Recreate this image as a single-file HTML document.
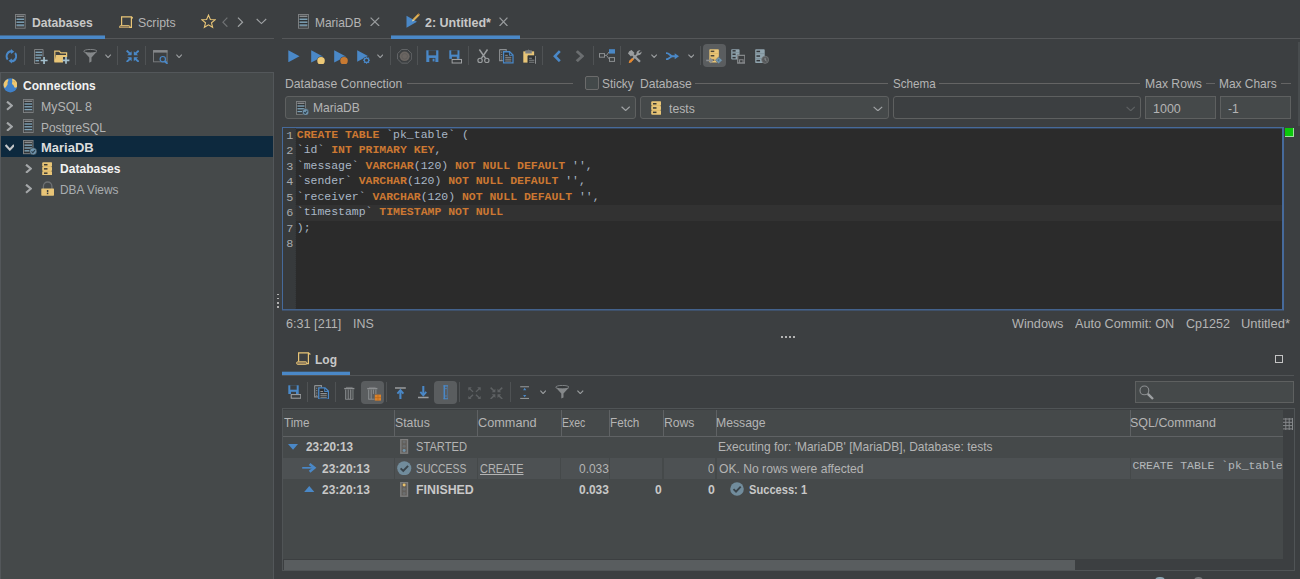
<!DOCTYPE html>
<html lang="en"><head><meta charset="utf-8"><title>DBeaver - SQL Editor</title><style>
html,body{margin:0;padding:0}
body{width:1300px;height:579px;overflow:hidden;background:#3c3f41;position:relative;font-family:"Liberation Sans",sans-serif;font-size:13px;color:#b4b4b4}
.a{position:absolute;display:block}
.t{position:absolute;white-space:pre;line-height:17px;transform-origin:0 0;display:block}
.b{font-weight:700}
.ln,.cd{position:absolute;white-space:pre;font-family:"Liberation Mono",monospace;font-size:11.47px;line-height:15px;color:#a9b7c6;letter-spacing:0;display:block}
.ln{color:#a7abae;font-size:11.8px;line-height:16px;letter-spacing:0}
.cd b{color:#cc7832}
</style></head><body>
<div class="a" style="left:0px;top:38px;width:273.5px;height:1px;background:#555759"></div>
<div class="a" style="left:0px;top:36px;width:105.4px;height:3px;background:#4a88c7"></div>
<div class="a" style="left:0px;top:35px;width:105.4px;height:1px;background:#4a88c7;opacity:.55"></div>
<svg class="a" style="left:15px;top:14.3px" width="10.6" height="14.7" viewBox="0 0 11 15" preserveAspectRatio="none"><rect x="0.5" y="0.5" width="10" height="14" fill="#2f3234" stroke="#7d8082" stroke-width="1"/><rect x="1.5" y="1.6" width="8" height="1.6" fill="#8a8c8e"/><rect x="1.5" y="4.6" width="8" height="1.5" fill="#7fa3b8"/><rect x="1.5" y="7.6" width="8" height="1.5" fill="#7fa3b8"/><rect x="1.5" y="10.6" width="8" height="1.5" fill="#7fa3b8"/><rect x="1.5" y="12.6" width="8" height="0.8" fill="#6b6e70"/></svg>
<span class="t b" style="left:32.47px;top:14px;transform:scaleX(0.9344);color:#c8c8c8;">Databases</span>
<svg class="a" style="left:118.6px;top:15.6px" width="14.5" height="12.8" viewBox="0 0 14.5 13" preserveAspectRatio="none"><path d="M2.6 9.6 V0.9 H12.4 V11.6 H10" fill="none" stroke="#e8c577" stroke-width="1.2"/><path d="M12.4 1.4 H13.9 V2.9" fill="none" stroke="#e8c577" stroke-width="1"/><rect x="0.7" y="9.8" width="10" height="2.5" rx="0.8" fill="#7d6c55" stroke="#e8c577" stroke-width="1"/></svg>
<span class="t" style="left:138.05px;top:14px;transform:scaleX(0.9474);">Scripts</span>
<svg class="a" style="left:200.5px;top:14.3px" width="15" height="14.5" viewBox="0 0 16 16" preserveAspectRatio="none"><path d="M8 1.2 L10 6 L15 6.4 L11.2 9.7 L12.4 14.7 L8 12 L3.6 14.7 L4.8 9.7 L1 6.4 L6 6 Z" fill="none" stroke="#e8c577" stroke-width="1.2" stroke-linejoin="miter"/></svg>
<svg class="a" style="left:221.6px;top:16.8px" width="6.3" height="10.4" viewBox="0 0 10 16" preserveAspectRatio="none"><path d="M8.5 1 L1.5 8 L8.5 15" fill="none" stroke="#6f7274" stroke-width="1.2" vector-effect="non-scaling-stroke"/></svg>
<svg class="a" style="left:237.2px;top:16.8px" width="6.5" height="10.4" viewBox="0 0 10 16" preserveAspectRatio="none"><path d="M1.5 1 L8.5 8 L1.5 15" fill="none" stroke="#a0a3a5" stroke-width="1.2" vector-effect="non-scaling-stroke"/></svg>
<svg class="a" style="left:256.1px;top:18.3px" width="10.9" height="6.6" viewBox="0 0 16 10" preserveAspectRatio="none"><path d="M1 1.5 L8 8.5 L15 1.5" fill="none" stroke="#a0a3a5" stroke-width="1.1" vector-effect="non-scaling-stroke"/></svg>
<div class="a" style="left:23.9px;top:45.8px;width:1px;height:19.5px;background:#4f5254"></div>
<div class="a" style="left:75.2px;top:45.8px;width:1px;height:19.5px;background:#4f5254"></div>
<div class="a" style="left:116.8px;top:45.8px;width:1px;height:19.5px;background:#4f5254"></div>
<div class="a" style="left:145.1px;top:45.8px;width:1px;height:19.5px;background:#4f5254"></div>
<svg class="a" style="left:4.6px;top:49.4px" width="12.8" height="14.5" viewBox="0 0 16 16" preserveAspectRatio="none"><path d="M8.4 2.6 A5.5 5.5 0 0 0 3.4 11.6" fill="none" stroke="#4a88c7" stroke-width="2.4"/><path d="M7.6 13.4 A5.5 5.5 0 0 0 12.6 4.4" fill="none" stroke="#4a88c7" stroke-width="2.4"/><path d="M7.4 0 L11.6 2.9 L7.4 5.6 Z" fill="#4a88c7"/><path d="M8.6 16 L4.4 13.1 L8.6 10.4 Z" fill="#4a88c7"/></svg>
<svg class="a" style="left:34px;top:49px" width="13.8" height="15" viewBox="0 0 14 15" preserveAspectRatio="none"><path d="M0.5 0.5 H9.2 V7.5 M5.5 14.5 H0.5 V0.5" fill="none" stroke="#7d8082" stroke-width="1"/><rect x="1.5" y="2.6" width="6.8" height="1.4" fill="#7fa3b8"/><rect x="1.5" y="5.4" width="6.8" height="1.4" fill="#7fa3b8"/><rect x="1.5" y="8.2" width="5.6" height="1.4" fill="#7fa3b8"/><rect x="1.5" y="11" width="3.6" height="1.4" fill="#7fa3b8"/><path d="M10.2 8 V15 M6.7 11.5 H13.8" stroke="#a4c0ce" stroke-width="1.7" fill="none"/></svg>
<svg class="a" style="left:54.4px;top:49.4px" width="16" height="14.8" viewBox="0 0 16 15" preserveAspectRatio="none"><path d="M0.8 13 V2.2 H5.2 L6.8 4 H12.6 V6" fill="#3c3f41" stroke="#e8c577" stroke-width="1.2"/><path d="M0.3 13.6 L2 6 H13.2 V8 H9 V13.6 Z" fill="#e8c577"/><path d="M12 8.2 V15 M8.6 11.6 H15.4" stroke="#a4c0ce" stroke-width="1.7" fill="none"/></svg>
<svg class="a" style="left:82.6px;top:48.8px" width="14.8" height="14.6" viewBox="0 0 16 16" preserveAspectRatio="none"><path d="M0.6 2.4 L6.8 9.4 V15 L9.2 13.8 V9.4 L15.4 2.4 Z" fill="#85888a"/><ellipse cx="8" cy="2.4" rx="7.2" ry="1.9" fill="#35383a" stroke="#85888a" stroke-width="1"/></svg>
<svg class="a" style="left:105.4px;top:53.6px" width="6.2" height="4.2" viewBox="0 0 16 10" preserveAspectRatio="none"><path d="M1 1.5 L8 8.5 L15 1.5" fill="none" stroke="#9a9d9f" stroke-width="1.2" vector-effect="non-scaling-stroke"/></svg>
<svg class="a" style="left:125.7px;top:49.6px" width="13.4" height="12.5" viewBox="0 0 16 16" preserveAspectRatio="none"><path d="M0.8 0.8 L5.7 5.7" stroke="#4a88c7" stroke-width="2.4" fill="none"/><path d="M6.7 6.7 L1.5 6.7 L6.7 1.5 Z" fill="#4a88c7"/><path d="M15.2 0.8 L10.3 5.7" stroke="#4a88c7" stroke-width="2.4" fill="none"/><path d="M9.3 6.7 L14.5 6.7 L9.3 1.5 Z" fill="#4a88c7"/><path d="M0.8 15.2 L5.7 10.3" stroke="#4a88c7" stroke-width="2.4" fill="none"/><path d="M6.7 9.3 L1.5 9.3 L6.7 14.5 Z" fill="#4a88c7"/><path d="M15.2 15.2 L10.3 10.3" stroke="#4a88c7" stroke-width="2.4" fill="none"/><path d="M9.3 9.3 L14.5 9.3 L9.3 14.5 Z" fill="#4a88c7"/></svg>
<svg class="a" style="left:153px;top:49.6px" width="15.2" height="14.4" viewBox="0 0 15.2 14.4" preserveAspectRatio="none"><rect x="0.5" y="0.6" width="13.6" height="11.2" fill="none" stroke="#77797b" stroke-width="1"/><rect x="0.2" y="0.2" width="14.2" height="2.4" fill="#85888a"/><circle cx="9.8" cy="9.2" r="2.7" fill="#3c3f41" stroke="#4a88c7" stroke-width="1.2"/><path d="M11.8 11.2 L14.6 13.8" stroke="#4a88c7" stroke-width="1.9"/></svg>
<svg class="a" style="left:175.6px;top:53.6px" width="6.2" height="4.2" viewBox="0 0 16 10" preserveAspectRatio="none"><path d="M1 1.5 L8 8.5 L15 1.5" fill="none" stroke="#9a9d9f" stroke-width="1.2" vector-effect="non-scaling-stroke"/></svg>
<div class="a" style="left:0px;top:72px;width:274px;height:510px;background:#45494a;border:1px solid #53575a;box-sizing:border-box"></div>
<div class="a" style="left:1px;top:136px;width:272px;height:21px;background:#0d293e"></div>
<svg class="a" style="left:2.7px;top:77.8px" width="14.8" height="14.8" viewBox="0 0 16 16" preserveAspectRatio="none"><circle cx="8" cy="8" r="7.6" fill="#3f80c8"/><path d="M4.2 1.6 C2.6 2.6 1.2 4.2 0.7 6.2 C0.5 8 0.9 9.6 1.8 10.8 C2.8 10.6 3.4 9.6 3.8 8.6 C4.8 7.8 5.4 6.6 4.8 5.4 C5 4.2 5.8 3.2 6 2 C5.4 1.4 4.8 1.3 4.2 1.6 Z" fill="#efc76f"/><path d="M9.8 0.7 C11.8 1 13.6 2.2 14.7 4.2 C15.5 6 15.6 8 15 9.8 C14 10.6 13 10.8 12.2 10 C12 8.8 11.6 8 10.6 7.4 C9.6 6.6 9.4 5.6 10 4.6 C10.4 3.4 9.6 2 9.8 0.7 Z" fill="#efc76f"/><path d="M11.4 3.6 L12.6 4 L12.2 5 Z" fill="#8a6a30"/></svg>
<span class="t b" style="left:23.00px;top:77px;transform:scaleX(0.9244);color:#f2f2f2;">Connections</span>
<svg class="a" style="left:6.4px;top:101.4px" width="6.8" height="9.4" viewBox="0 0 10 16" preserveAspectRatio="none"><path d="M1.5 1 L8.5 8 L1.5 15" fill="none" stroke="#a4a7a9" stroke-width="2.1" vector-effect="non-scaling-stroke"/></svg>
<svg class="a" style="left:23.3px;top:98.7px" width="10.6" height="14" viewBox="0 0 11 15" preserveAspectRatio="none"><rect x="0.5" y="0.5" width="10" height="14" fill="#2f3234" stroke="#7d8082" stroke-width="1"/><rect x="1.5" y="1.6" width="8" height="1.6" fill="#8a8c8e"/><rect x="1.5" y="4.6" width="8" height="1.5" fill="#7fa3b8"/><rect x="1.5" y="7.6" width="8" height="1.5" fill="#7fa3b8"/><rect x="1.5" y="10.6" width="8" height="1.5" fill="#7fa3b8"/><rect x="1.5" y="12.6" width="8" height="0.8" fill="#6b6e70"/></svg>
<span class="t" style="left:40.65px;top:98px;transform:scaleX(0.9481);">MySQL 8</span>
<svg class="a" style="left:6.4px;top:122px" width="6.8" height="9.4" viewBox="0 0 10 16" preserveAspectRatio="none"><path d="M1.5 1 L8.5 8 L1.5 15" fill="none" stroke="#a4a7a9" stroke-width="2.1" vector-effect="non-scaling-stroke"/></svg>
<svg class="a" style="left:23.3px;top:119.3px" width="10.6" height="14" viewBox="0 0 11 15" preserveAspectRatio="none"><rect x="0.5" y="0.5" width="10" height="14" fill="#2f3234" stroke="#7d8082" stroke-width="1"/><rect x="1.5" y="1.6" width="8" height="1.6" fill="#8a8c8e"/><rect x="1.5" y="4.6" width="8" height="1.5" fill="#7fa3b8"/><rect x="1.5" y="7.6" width="8" height="1.5" fill="#7fa3b8"/><rect x="1.5" y="10.6" width="8" height="1.5" fill="#7fa3b8"/><rect x="1.5" y="12.6" width="8" height="0.8" fill="#6b6e70"/></svg>
<span class="t" style="left:40.68px;top:119px;transform:scaleX(0.9157);">PostgreSQL</span>
<svg class="a" style="left:4.7px;top:144.4px" width="9.7" height="6.6" viewBox="0 0 16 10" preserveAspectRatio="none"><path d="M1 1.5 L8 8.5 L15 1.5" fill="none" stroke="#c4c7c9" stroke-width="2.1" vector-effect="non-scaling-stroke"/></svg>
<svg class="a" style="left:23.2px;top:140px" width="14" height="15.2" viewBox="0 0 14 15" preserveAspectRatio="none"><rect x="0.5" y="0.5" width="9.5" height="13" fill="#2f3234" stroke="#7d8082" stroke-width="1"/><rect x="1.5" y="1.6" width="7.5" height="1.5" fill="#8a8c8e"/><rect x="1.5" y="4.4" width="7.5" height="1.4" fill="#7fa3b8"/><rect x="1.5" y="7.2" width="7.5" height="1.4" fill="#7fa3b8"/><rect x="1.5" y="10" width="5" height="1.4" fill="#7fa3b8"/><circle cx="10.2" cy="11.2" r="3.5" fill="#6f94ad" stroke="#3c3f41" stroke-width="0.6"/><path d="M8.5 11.2 L9.8 12.5 L12 9.9" fill="none" stroke="#2b3d4a" stroke-width="1.1"/></svg>
<span class="t b" style="left:40.60px;top:139px;transform:scaleX(0.9980);color:#dcdcdc;">MariaDB</span>
<svg class="a" style="left:24.8px;top:163.6px" width="6.8" height="9.4" viewBox="0 0 10 16" preserveAspectRatio="none"><path d="M1.5 1 L8.5 8 L1.5 15" fill="none" stroke="#a4a7a9" stroke-width="2.1" vector-effect="non-scaling-stroke"/></svg>
<svg class="a" style="left:42px;top:161.5px" width="10.4" height="13.8" viewBox="0 0 10.6 14" preserveAspectRatio="none"><rect x="0.2" y="0.2" width="10.2" height="13.6" rx="1.2" fill="#e8c577"/><rect x="2" y="2" width="3.6" height="1.5" fill="#3a3a34"/><rect x="2" y="6.2" width="3.6" height="1.5" fill="#3a3a34"/><rect x="2" y="10.6" width="3.6" height="1.5" fill="#3a3a34"/><rect x="9.6" y="4.3" width="1" height="0.9" fill="#45494a"/><rect x="9.6" y="8.8" width="1" height="0.9" fill="#45494a"/><rect x="0" y="4.3" width="0.7" height="0.9" fill="#45494a"/><rect x="0" y="8.8" width="0.7" height="0.9" fill="#45494a"/><rect x="0.8" y="4.5" width="8.8" height="0.5" fill="#d4ae5a"/><rect x="0.8" y="9" width="8.8" height="0.5" fill="#d4ae5a"/></svg>
<span class="t b" style="left:59.67px;top:160px;transform:scaleX(0.9281);color:#f2f2f2;">Databases</span>
<svg class="a" style="left:24.8px;top:184.2px" width="6.8" height="9.4" viewBox="0 0 10 16" preserveAspectRatio="none"><path d="M1.5 1 L8.5 8 L1.5 15" fill="none" stroke="#a4a7a9" stroke-width="2.1" vector-effect="non-scaling-stroke"/></svg>
<svg class="a" style="left:40.8px;top:180.8px" width="13.3" height="15" viewBox="0 0 13.4 15" preserveAspectRatio="none"><path d="M2.4 8 V5.4 A4.3 4.4 0 0 1 11 5.4 V8" fill="none" stroke="#6e7173" stroke-width="1.3"/><rect x="0.3" y="7.5" width="12.8" height="7.2" rx="0.6" fill="#e8c577"/><rect x="5.9" y="9" width="1.5" height="2.4" fill="#3c3f41"/><rect x="5.9" y="12" width="1.5" height="1.2" fill="#3c3f41"/></svg>
<span class="t" style="left:59.69px;top:181px;transform:scaleX(0.9127);color:#a9adb0;">DBA Views</span>
<div class="a" style="left:277.2px;top:293.8px;width:1.6px;height:1.6px;background:#b0b0b0"></div>
<div class="a" style="left:277.2px;top:297.90000000000003px;width:1.6px;height:1.6px;background:#b0b0b0"></div>
<div class="a" style="left:277.2px;top:302.0px;width:1.6px;height:1.6px;background:#b0b0b0"></div>
<div class="a" style="left:277.2px;top:306.1px;width:1.6px;height:1.6px;background:#b0b0b0"></div>
<div class="a" style="left:282.3px;top:38px;width:1018px;height:1px;background:#555759"></div>
<div class="a" style="left:390.9px;top:36px;width:129.4px;height:3px;background:#4a88c7"></div>
<div class="a" style="left:390.9px;top:35px;width:129.4px;height:1px;background:#4a88c7;opacity:.55"></div>
<svg class="a" style="left:297.8px;top:14.3px" width="10.9" height="14.7" viewBox="0 0 11 15" preserveAspectRatio="none"><rect x="0.5" y="0.5" width="10" height="14" fill="#2f3234" stroke="#7d8082" stroke-width="1"/><rect x="1.5" y="1.6" width="8" height="1.6" fill="#8a8c8e"/><rect x="1.5" y="4.6" width="8" height="1.5" fill="#7fa3b8"/><rect x="1.5" y="7.6" width="8" height="1.5" fill="#7fa3b8"/><rect x="1.5" y="10.6" width="8" height="1.5" fill="#7fa3b8"/><rect x="1.5" y="12.6" width="8" height="0.8" fill="#6b6e70"/></svg>
<span class="t" style="left:315.08px;top:14px;transform:scaleX(0.9184);">MariaDB</span>
<svg class="a" style="left:369.9px;top:16.8px" width="9.8" height="9.6" viewBox="0 0 16 16" preserveAspectRatio="none"><path d="M1 1 L15 15 M15 1 L1 15" fill="none" stroke="#9a9d9f" stroke-width="1.2" vector-effect="non-scaling-stroke"/></svg>
<svg class="a" style="left:406.4px;top:13.2px" width="14.3" height="15.5" viewBox="0 0 15 16" preserveAspectRatio="none"><path d="M0.5 2.8 L11.5 9 L0.5 15.2 Z" fill="#4a88c7"/><path d="M7.2 6.2 L12.4 1 L14 2.6 L8.8 7.8 Z" fill="#e0b052"/><path d="M6.2 8.8 L7.2 6.2 L8.8 7.8 Z" fill="#f3dba0"/><path d="M12.4 1 L13.2 0.2 L14.8 1.8 L14 2.6 Z" fill="#c98a3a"/></svg>
<span class="t b" style="left:424.80px;top:14px;transform:scaleX(0.9609);color:#c8c8c8;">2: Untitled*</span>
<svg class="a" style="left:499.3px;top:16.8px" width="9" height="9.6" viewBox="0 0 16 16" preserveAspectRatio="none"><path d="M1 1 L15 15 M15 1 L1 15" fill="none" stroke="#9a9d9f" stroke-width="1.2" vector-effect="non-scaling-stroke"/></svg>
<div class="a" style="left:390.1px;top:45.8px;width:1px;height:19.5px;background:#4f5254"></div>
<div class="a" style="left:417.1px;top:45.8px;width:1px;height:19.5px;background:#4f5254"></div>
<div class="a" style="left:468.1px;top:45.8px;width:1px;height:19.5px;background:#4f5254"></div>
<div class="a" style="left:541.9px;top:45.8px;width:1px;height:19.5px;background:#4f5254"></div>
<div class="a" style="left:592.7px;top:45.8px;width:1px;height:19.5px;background:#4f5254"></div>
<div class="a" style="left:620.2px;top:45.8px;width:1px;height:19.5px;background:#4f5254"></div>
<div class="a" style="left:699.9px;top:45.8px;width:1px;height:19.5px;background:#4f5254"></div>
<svg class="a" style="left:288.3px;top:49.7px" width="11.7" height="12.5" viewBox="0 0 12 12.6" preserveAspectRatio="none"><path d="M0.3 0.2 L11.8 6.3 L0.3 12.4 Z" fill="#4a88c7"/></svg>
<svg class="a" style="left:311.2px;top:49.6px" width="14.2" height="14.8" viewBox="0 0 14 14.6" preserveAspectRatio="none"><path d="M0.2 0.2 L11.8 6.3 L0.2 12.4 Z" fill="#4a88c7"/><circle cx="9.9" cy="10.7" r="4.3" fill="#3c3f41"/><circle cx="9.9" cy="10.7" r="3.7" fill="#ecc877"/></svg>
<svg class="a" style="left:333.9px;top:49.6px" width="14.2" height="14.8" viewBox="0 0 14 14.6" preserveAspectRatio="none"><path d="M0.2 0.2 L11.8 6.3 L0.2 12.4 Z" fill="#4a88c7"/><circle cx="9.9" cy="10.7" r="4.3" fill="#3c3f41"/><circle cx="9.9" cy="10.7" r="3.7" fill="#c87a32"/></svg>
<svg class="a" style="left:356.7px;top:49.7px" width="13.5" height="14" viewBox="0 0 14 14.5" preserveAspectRatio="none"><path d="M0.2 0.2 L11.3 6.2 L0.2 12.2 Z" fill="#4a88c7"/><circle cx="9.9" cy="10.6" r="3.6" fill="#3c3f41"/><circle cx="9.9" cy="10.6" r="2.3" fill="none" stroke="#4a88c7" stroke-width="1.3"/><path d="M9.9 6.9 V8 M9.9 13.2 V14.3 M6.2 10.6 H7.3 M12.5 10.6 H13.6 M7.3 8 L8 8.7 M11.8 12.5 L12.5 13.2 M12.5 8 L11.8 8.7 M7.3 13.2 L8 12.5" stroke="#4a88c7" stroke-width="1.2"/></svg>
<svg class="a" style="left:377px;top:53.8px" width="6.4" height="4.2" viewBox="0 0 16 10" preserveAspectRatio="none"><path d="M1 1.5 L8 8.5 L15 1.5" fill="none" stroke="#9a9d9f" stroke-width="1.2" vector-effect="non-scaling-stroke"/></svg>
<svg class="a" style="left:397px;top:49px" width="15.3" height="14.7" viewBox="0 0 16 16" preserveAspectRatio="none"><path d="M5 0.6 H11 L15.4 5 V11 L11 15.4 H5 L0.6 11 V5 Z" fill="none" stroke="#6b6e70" stroke-width="0.9"/><circle cx="8" cy="8" r="5.2" fill="#6a6561"/><circle cx="8" cy="8" r="3" fill="none" stroke="#5c5a58" stroke-width="0.8"/></svg>
<svg class="a" style="left:426.3px;top:49.8px" width="12.7" height="12.6" viewBox="0 0 13 13" preserveAspectRatio="none"><path d="M0.3 0.3 H12.7 V12.7 H0.3 Z" fill="#4a88c7"/><rect x="2.6" y="0.3" width="7.8" height="5.2" fill="#3c3f41"/><rect x="3.4" y="8.2" width="6.2" height="4.5" fill="#3c3f41"/><rect x="6.8" y="9" width="1.9" height="2.8" fill="#4a88c7"/></svg>
<svg class="a" style="left:449.2px;top:49.8px" width="13.2" height="13.8" viewBox="0 0 13.5 14" preserveAspectRatio="none"><path d="M0.3 0.3 H10.7 V9 H0.3 Z" fill="#4a88c7"/><rect x="2.3" y="0.3" width="6.4" height="4.4" fill="#3c3f41"/><rect x="3" y="6.8" width="5" height="2.6" fill="#3c3f41"/><rect x="3.2" y="9.6" width="9.6" height="3.6" fill="#3c3f41" stroke="#a2a4a6" stroke-width="1"/></svg>
<svg class="a" style="left:476.7px;top:49.3px" width="12.9" height="14.2" viewBox="0 0 13 14.4" preserveAspectRatio="none"><path d="M2.4 0.5 L8.6 9.6 M10.6 0.5 L4.4 9.6" fill="none" stroke="#9a9d9f" stroke-width="1.5"/><circle cx="3.1" cy="11.6" r="2.2" fill="none" stroke="#9a9d9f" stroke-width="1.2"/><circle cx="9.9" cy="11.6" r="2.2" fill="none" stroke="#9a9d9f" stroke-width="1.2"/></svg>
<svg class="a" style="left:498.9px;top:49.2px" width="14.7" height="14.5" viewBox="0 0 14.7 14.7" preserveAspectRatio="none"><path d="M0.6 0.6 H7.2 V2.4 M0.6 0.6 V11.8 H3.8" fill="none" stroke="#8c8f91" stroke-width="1.1"/><path d="M1.9 3.2 H3.2 M1.9 5.6 H3.2 M1.9 8 H3.2 M1.9 10.2 H3.2" stroke="#8c8f91" stroke-width="0.9"/><path d="M4.6 2.8 H10.6 L14 6.2 V14 H4.6 Z" fill="#2f3133" stroke="#4a88c7" stroke-width="1.3"/><path d="M10.4 3 V6.4 H13.8" fill="none" stroke="#4a88c7" stroke-width="1"/><path d="M6.2 6.4 H8.8 M6.2 8.4 H12.4 M6.2 10.3 H12.4 M6.2 12.2 H12.4" stroke="#8f9294" stroke-width="1"/></svg>
<svg class="a" style="left:523px;top:48.6px" width="13.2" height="15.2" viewBox="0 0 13.4 15.4" preserveAspectRatio="none"><rect x="0.3" y="2.4" width="11" height="11.4" fill="#e8c577"/><path d="M2.6 4.2 V1.8 H4.4 A1.6 1.6 0 0 1 7 1.8 H8.8 V4.2 Z" fill="#77797b" stroke="#8c8f91" stroke-width="0.6"/><path d="M5 6.8 H12.6 V15 H5 Z" fill="#2f3133" stroke="#3c3f41" stroke-width="0.8"/><path d="M12.7 7 V15" stroke="#9a9d9f" stroke-width="0.9"/><path d="M6.2 9.4 H9 M6.2 11.4 H11.6 M6.2 13.4 H11.6" stroke="#8f9294" stroke-width="0.9"/></svg>
<svg class="a" style="left:552.8px;top:49.8px" width="8.4" height="12.4" viewBox="0 0 8.6 12.6" preserveAspectRatio="none"><path d="M7 1.2 L2 6.3 L7 11.4" fill="none" stroke="#4a88c7" stroke-width="2.7" stroke-linejoin="miter"/></svg>
<svg class="a" style="left:574.5px;top:49.8px" width="9.5" height="12.4" viewBox="0 0 8.6 12.6" preserveAspectRatio="none"><path d="M1.6 1.2 L6.6 6.3 L1.6 11.4" fill="none" stroke="#6b6e70" stroke-width="2.7" stroke-linejoin="miter"/></svg>
<svg class="a" style="left:599px;top:49.2px" width="16.4" height="13.2" viewBox="0 0 16.4 13.2" preserveAspectRatio="none"><rect x="0.5" y="4.6" width="5" height="3.6" fill="none" stroke="#8c8f91" stroke-width="1"/><rect x="10" y="0.2" width="6" height="4.4" fill="#4a88c7"/><rect x="10.5" y="8.6" width="5" height="3.8" fill="none" stroke="#8c8f91" stroke-width="1"/><path d="M5.5 6.4 H7.5 L10 3 M7.5 6.4 L10.5 10.4" fill="none" stroke="#8c8f91" stroke-width="1"/></svg>
<svg class="a" style="left:627.4px;top:48.5px" width="15.6" height="14.8" viewBox="0 0 15.6 15" preserveAspectRatio="none"><path d="M2.2 2.2 L4.6 1 L7.6 4 L6.6 5 L13.8 12.2 L12.2 13.8 L5 6.6 L4 7.6 L1 4.6 Z" fill="#9a9d9f"/><path d="M13.6 1.4 A3.4 3.4 0 0 0 9.4 5 L2.6 11.8 L1.8 14 L4 13.2 L10.8 6.4 A3.4 3.4 0 0 0 14.6 2.6 L12.6 4.4 L11.4 3.2 Z" fill="#9a9d9f"/><path d="M1.6 14.6 L2.6 11.4 L5 13.2 Z" fill="#e8872a"/><path d="M2.6 11.6 L5.2 9 L6.8 10.6 L4.4 13.2 Z" fill="#e8872a"/></svg>
<svg class="a" style="left:650.7px;top:53.9px" width="6.3" height="4" viewBox="0 0 16 10" preserveAspectRatio="none"><path d="M1 1.5 L8 8.5 L15 1.5" fill="none" stroke="#9a9d9f" stroke-width="1.2" vector-effect="non-scaling-stroke"/></svg>
<svg class="a" style="left:666.1px;top:51.6px" width="13.2" height="8.4" viewBox="0 0 13.2 8.4" preserveAspectRatio="none"><path d="M0.6 1.1 C3.2 1.1 4.4 4.2 6.6 4.2 H9.6 M0.6 7.3 C3.2 7.3 4.4 4.2 6.6 4.2" fill="none" stroke="#4a88c7" stroke-width="1.9" stroke-linecap="round"/><path d="M8.7 1.2 L13 4.2 L8.7 7.2 Z" fill="#4a88c7"/></svg>
<svg class="a" style="left:687.7px;top:53.9px" width="6.5" height="4" viewBox="0 0 16 10" preserveAspectRatio="none"><path d="M1 1.5 L8 8.5 L15 1.5" fill="none" stroke="#9a9d9f" stroke-width="1.2" vector-effect="non-scaling-stroke"/></svg>
<div class="a" style="left:703px;top:43.8px;width:23px;height:23px;background:#5a5d5f;border-radius:4px"></div>
<svg class="a" style="left:706.4px;top:49px" width="16.6" height="14.8" viewBox="0 0 16 15" preserveAspectRatio="none"><rect x="3.2" y="0.2" width="9.2" height="13.4" rx="0.8" fill="#e8c577"/><rect x="4.5" y="1.63" width="3.50" height="1.5" fill="#4a4538"/><rect x="4.5" y="6.10" width="3.50" height="1.5" fill="#4a4538"/><rect x="4.5" y="10.57" width="3.50" height="1.5" fill="#4a4538"/><rect x="3.7" y="4.42" width="8.2" height="0.5" fill="#d4ae5a"/><rect x="3.7" y="8.88" width="8.2" height="0.5" fill="#d4ae5a"/><path d="M0.2 11.6 H5" stroke="#8c8f91" stroke-width="1.6" fill="none"/><path d="M4 8.6 L7.4 11.6 L4 14.6 Z" fill="#8c8f91"/><path d="M9 11.4 L12.2 8 L15.8 11.4 L12.2 15 Z" fill="#6f94ad" stroke="#5a5d5f" stroke-width="0.5"/><path d="M11 11.4 L12.8 9.8 V13 Z" fill="#4a6f87"/></svg>
<svg class="a" style="left:730.6px;top:49px" width="14.8" height="14.6" viewBox="0 0 15.2 14.6" preserveAspectRatio="none"><rect x="0.2" y="0.2" width="8.6" height="10.2" rx="0.8" fill="#8fa3ad"/><rect x="1.5" y="1.10" width="3.27" height="1.5" fill="#34373a"/><rect x="1.5" y="4.50" width="3.27" height="1.5" fill="#34373a"/><rect x="1.5" y="7.90" width="3.27" height="1.5" fill="#34373a"/><rect x="0.7" y="3.35" width="7.6" height="0.5" fill="#6e8088"/><rect x="0.7" y="6.75" width="7.6" height="0.5" fill="#6e8088"/><rect x="6.2" y="5.8" width="8.6" height="8.6" fill="#3c3f41"/><path d="M6.9 6.4 H14.2 V14 H6.9 Z" fill="none" stroke="#85888a" stroke-width="1.3"/><path d="M8.8 14 V10.8 H12.4 V14" fill="none" stroke="#85888a" stroke-width="1.1"/></svg>
<svg class="a" style="left:755px;top:49px" width="13.8" height="14.6" viewBox="0 0 14.2 14.6" preserveAspectRatio="none"><rect x="0.2" y="0.2" width="9.8" height="13.8" rx="0.8" fill="#8fa3ad"/><rect x="1.5" y="1.70" width="3.72" height="1.5" fill="#34373a"/><rect x="1.5" y="6.30" width="3.72" height="1.5" fill="#34373a"/><rect x="1.5" y="10.90" width="3.72" height="1.5" fill="#34373a"/><rect x="0.7" y="4.55" width="8.8" height="0.5" fill="#6e8088"/><rect x="0.7" y="9.15" width="8.8" height="0.5" fill="#6e8088"/><circle cx="10.4" cy="10.8" r="3.6" fill="#55585a" stroke="#77797b" stroke-width="0.8"/><path d="M10.4 8.8 V10.9 L11.9 12" fill="none" stroke="#9a9d9f" stroke-width="0.8"/></svg>
<span class="t" style="left:285.46px;top:75px;transform:scaleX(0.9374);">Database Connection</span>
<div class="a" style="left:406.7px;top:83px;width:166.5px;height:1px;background:#646464"></div>
<div class="a" style="left:584.7px;top:75.6px;width:14.3px;height:14.4px;background:#43494a;border:1px solid #6b6b6b;border-radius:2px;box-sizing:border-box"></div>
<span class="t" style="left:602.39px;top:75px;transform:scaleX(0.9147);">Sticky</span>
<span class="t" style="left:639.97px;top:75px;transform:scaleX(0.9296);">Database</span>
<div class="a" style="left:695.3px;top:83px;width:193px;height:1px;background:#646464"></div>
<span class="t" style="left:892.51px;top:75px;transform:scaleX(0.8936);">Schema</span>
<div class="a" style="left:939.3px;top:83px;width:201.2px;height:1px;background:#646464"></div>
<span class="t" style="left:1144.86px;top:75px;transform:scaleX(0.9356);">Max Rows</span>
<div class="a" style="left:1205.7px;top:83px;width:9px;height:1px;background:#646464"></div>
<span class="t" style="left:1219.48px;top:75px;transform:scaleX(0.9180);">Max Chars</span>
<div class="a" style="left:1281px;top:83px;width:9.8px;height:1px;background:#646464"></div>
<div class="a" style="left:285px;top:96px;width:351px;height:23px;border:1px solid #5e6060;box-sizing:border-box;background:#45494a;border-radius:3px"></div>
<svg class="a" style="left:296.2px;top:100.6px" width="13.2" height="14.8" viewBox="0 0 14 15" preserveAspectRatio="none"><rect x="0.5" y="0.5" width="9.5" height="13" fill="#2f3234" stroke="#7d8082" stroke-width="1"/><rect x="1.5" y="1.6" width="7.5" height="1.5" fill="#8a8c8e"/><rect x="1.5" y="4.4" width="7.5" height="1.4" fill="#7fa3b8"/><rect x="1.5" y="7.2" width="7.5" height="1.4" fill="#7fa3b8"/><rect x="1.5" y="10" width="5" height="1.4" fill="#7fa3b8"/><circle cx="10.2" cy="11.2" r="3.5" fill="#6f94ad" stroke="#3c3f41" stroke-width="0.6"/><path d="M8.5 11.2 L9.8 12.5 L12 9.9" fill="none" stroke="#2b3d4a" stroke-width="1.1"/></svg>
<span class="t" style="left:312.87px;top:99px;transform:scaleX(0.9265);">MariaDB</span>
<svg class="a" style="left:620.7px;top:105.6px" width="9.3" height="5.3" viewBox="0 0 16 10" preserveAspectRatio="none"><path d="M1 1.5 L8 8.5 L15 1.5" fill="none" stroke="#a0a3a5" stroke-width="1.2" vector-effect="non-scaling-stroke"/></svg>
<div class="a" style="left:640px;top:96px;width:249px;height:23px;border:1px solid #5e6060;box-sizing:border-box;background:#45494a;border-radius:3px"></div>
<svg class="a" style="left:650.7px;top:101.3px" width="10.4" height="14" viewBox="0 0 10.6 14" preserveAspectRatio="none"><rect x="0.2" y="0.2" width="10.2" height="13.6" rx="1.2" fill="#e8c577"/><rect x="2" y="2" width="3.6" height="1.5" fill="#3a3a34"/><rect x="2" y="6.2" width="3.6" height="1.5" fill="#3a3a34"/><rect x="2" y="10.6" width="3.6" height="1.5" fill="#3a3a34"/><rect x="9.6" y="4.3" width="1" height="0.9" fill="#45494a"/><rect x="9.6" y="8.8" width="1" height="0.9" fill="#45494a"/><rect x="0" y="4.3" width="0.7" height="0.9" fill="#45494a"/><rect x="0" y="8.8" width="0.7" height="0.9" fill="#45494a"/><rect x="0.8" y="4.5" width="8.8" height="0.5" fill="#d4ae5a"/><rect x="0.8" y="9" width="8.8" height="0.5" fill="#d4ae5a"/></svg>
<span class="t" style="left:668.90px;top:100px;transform:scaleX(0.9370);">tests</span>
<svg class="a" style="left:873.2px;top:105.6px" width="9.8" height="5.6" viewBox="0 0 16 10" preserveAspectRatio="none"><path d="M1 1.5 L8 8.5 L15 1.5" fill="none" stroke="#a0a3a5" stroke-width="1.2" vector-effect="non-scaling-stroke"/></svg>
<div class="a" style="left:893px;top:96px;width:248px;height:23px;border:1px solid #5e6060;box-sizing:border-box;background:#3c3f41;border-radius:3px"></div>
<svg class="a" style="left:1126px;top:105.6px" width="9.4" height="5.6" viewBox="0 0 16 10" preserveAspectRatio="none"><path d="M1 1.5 L8 8.5 L15 1.5" fill="none" stroke="#5d6062" stroke-width="1.2" vector-effect="non-scaling-stroke"/></svg>
<div class="a" style="left:1145px;top:96px;width:71px;height:23px;border:1px solid #5e6060;box-sizing:border-box;background:#45494a"></div>
<span class="t" style="left:1152.64px;top:100px;transform:scaleX(0.9607);">1000</span>
<div class="a" style="left:1220px;top:96px;width:71px;height:23px;border:1px solid #5e6060;box-sizing:border-box;background:#45494a"></div>
<span class="t" style="left:1227.70px;top:100px;transform:scaleX(0.9364);">-1</span>
<div class="a" style="left:1298px;top:42px;width:2px;height:84px;background:#484c4e"></div>
<div class="a" style="left:282px;top:127px;width:1002px;height:184px;background:#2b2b2b;border:1px solid #466a9b;border-right-width:2px;border-bottom-width:2px;border-bottom-color:#43628c;box-sizing:border-box"></div>
<div class="a" style="left:282px;top:310px;width:1002px;height:1px;background:#3c3f41;opacity:.45"></div>
<div class="a" style="left:283px;top:128px;width:999px;height:1px;background:#466a9b;opacity:.4"></div>
<div class="a" style="left:283px;top:128px;width:13.4px;height:181px;background:#373a3c;border-right:1px dotted #323537;box-sizing:border-box"></div>
<div class="a" style="left:296.4px;top:205px;width:985.6px;height:15.5px;background:#323232"></div>
<div class="a" style="left:1285px;top:127.8px;width:8.5px;height:9.2px;background:#0cc80c;border-right:1px solid #9fdf9f;border-bottom:1px solid #9fdf9f;box-sizing:border-box"></div>
<span class="ln" style="left:286.2px;top:128px">1</span><span class="cd" style="left:296.75px;top:127px"><b>CREATE TABLE</b> `pk_table` (</span>
<span class="ln" style="left:286.2px;top:143px">2</span><span class="cd" style="left:296.75px;top:142px">`id` <b>INT PRIMARY KEY</b>,</span>
<span class="ln" style="left:286.2px;top:159px">3</span><span class="cd" style="left:296.75px;top:158px">`message` <b>VARCHAR</b>(120) <b>NOT NULL DEFAULT</b> '',</span>
<span class="ln" style="left:286.2px;top:174px">4</span><span class="cd" style="left:296.75px;top:173px">`sender` <b>VARCHAR</b>(120) <b>NOT NULL DEFAULT</b> '',</span>
<span class="ln" style="left:286.2px;top:190px">5</span><span class="cd" style="left:296.75px;top:189px">`receiver` <b>VARCHAR</b>(120) <b>NOT NULL DEFAULT</b> '',</span>
<span class="ln" style="left:286.2px;top:205px">6</span><span class="cd" style="left:296.75px;top:204px">`timestamp` <b>TIMESTAMP NOT NULL</b></span>
<span class="ln" style="left:286.2px;top:221px">7</span><span class="cd" style="left:296.75px;top:220px">);</span>
<span class="ln" style="left:286.2px;top:236px">8</span>
<span class="t" style="left:285.73px;top:315px;transform:scaleX(0.9727);">6:31 [211]</span>
<span class="t" style="left:353.25px;top:315px;transform:scaleX(0.9550);">INS</span>
<span class="t" style="left:1012.30px;top:315px;transform:scaleX(0.9750);">Windows</span>
<span class="t" style="left:1075.30px;top:315px;transform:scaleX(0.9743);">Auto Commit: ON</span>
<span class="t" style="left:1185.84px;top:315px;transform:scaleX(0.9636);">Cp1252</span>
<span class="t" style="left:1241.30px;top:315px;transform:scaleX(0.9958);">Untitled*</span>
<div class="a" style="left:780.9px;top:336.2px;width:1.7px;height:1.7px;background:#b4b4b4"></div>
<div class="a" style="left:785.0px;top:336.2px;width:1.7px;height:1.7px;background:#b4b4b4"></div>
<div class="a" style="left:789.1px;top:336.2px;width:1.7px;height:1.7px;background:#b4b4b4"></div>
<div class="a" style="left:793.1999999999999px;top:336.2px;width:1.7px;height:1.7px;background:#b4b4b4"></div>
<div class="a" style="left:282px;top:375px;width:1012.3px;height:1px;background:#515456"></div>
<div class="a" style="left:282px;top:372px;width:68px;height:3px;background:#4a88c7"></div>
<div class="a" style="left:282px;top:371px;width:68px;height:1px;background:#4a88c7;opacity:.3"></div>
<svg class="a" style="left:296px;top:351.7px" width="14.5" height="13" viewBox="0 0 14.5 13" preserveAspectRatio="none"><path d="M2.6 9.6 V0.9 H12.4 V11.6 H10" fill="none" stroke="#e8c577" stroke-width="1.2"/><path d="M12.4 1.4 H13.9 V2.9" fill="none" stroke="#e8c577" stroke-width="1"/><rect x="0.7" y="9.8" width="10" height="2.5" rx="0.8" fill="#7d6c55" stroke="#e8c577" stroke-width="1"/></svg>
<span class="t b" style="left:315.08px;top:351px;transform:scaleX(0.9227);color:#c8c8c8;">Log</span>
<div class="a" style="left:1274.8px;top:355.2px;width:8px;height:8px;border:1.4px solid #c4c4c4;box-sizing:border-box"></div>
<div class="a" style="left:307.2px;top:381.7px;width:1px;height:20.2px;background:#4f5254"></div>
<div class="a" style="left:334.7px;top:381.7px;width:1px;height:20.2px;background:#4f5254"></div>
<div class="a" style="left:385.9px;top:381.7px;width:1px;height:20.2px;background:#4f5254"></div>
<div class="a" style="left:459.0px;top:381.7px;width:1px;height:20.2px;background:#4f5254"></div>
<div class="a" style="left:510.0px;top:381.7px;width:1px;height:20.2px;background:#4f5254"></div>
<svg class="a" style="left:287.5px;top:385.3px" width="13.5" height="14" viewBox="0 0 13.5 14" preserveAspectRatio="none"><path d="M0.3 0.3 H10.7 V9 H0.3 Z" fill="#4a88c7"/><rect x="2.3" y="0.3" width="6.4" height="4.4" fill="#3c3f41"/><rect x="3" y="6.8" width="5" height="2.6" fill="#3c3f41"/><rect x="3.2" y="9.6" width="9.6" height="3.6" fill="#3c3f41" stroke="#a2a4a6" stroke-width="1"/></svg>
<svg class="a" style="left:314.2px;top:384.6px" width="15.2" height="14.8" viewBox="0 0 14.7 14.7" preserveAspectRatio="none"><path d="M0.6 0.6 H7.2 V2.4 M0.6 0.6 V11.8 H3.8" fill="none" stroke="#8c8f91" stroke-width="1.1"/><path d="M1.9 3.2 H3.2 M1.9 5.6 H3.2 M1.9 8 H3.2 M1.9 10.2 H3.2" stroke="#8c8f91" stroke-width="0.9"/><path d="M4.6 2.8 H10.6 L14 6.2 V14 H4.6 Z" fill="#2f3133" stroke="#4a88c7" stroke-width="1.3"/><path d="M10.4 3 V6.4 H13.8" fill="none" stroke="#4a88c7" stroke-width="1"/><path d="M6.2 6.4 H8.8 M6.2 8.4 H12.4 M6.2 10.3 H12.4 M6.2 12.2 H12.4" stroke="#8f9294" stroke-width="1"/></svg>
<svg class="a" style="left:344.2px;top:386.2px" width="10.6" height="13.8" viewBox="0 0 10.6 13.8" preserveAspectRatio="none"><path d="M0.2 2.6 H10.4" stroke="#8c8f91" stroke-width="1.4"/><path d="M2 1.4 H8.6" stroke="#77797b" stroke-width="0.9"/><path d="M1.7 3.6 V13 M4.2 3.6 V13 M6.4 3.6 V13 M8.9 3.6 V13" fill="none" stroke="#8c8f91" stroke-width="1"/><path d="M1.2 13.2 H9.4" stroke="#8c8f91" stroke-width="1"/><rect x="2.2" y="3.6" width="1.5" height="9.2" fill="#55585a"/><rect x="6.9" y="3.6" width="1.5" height="9.2" fill="#55585a"/></svg>
<div class="a" style="left:360.8px;top:381px;width:23px;height:22.8px;background:#5a5d5f;border-radius:4px"></div>
<svg class="a" style="left:367px;top:386.4px" width="14.3" height="14.6" viewBox="0 0 14.3 14.6" preserveAspectRatio="none"><path d="M0.2 2.6 H10.4" stroke="#8c8f91" stroke-width="1.4"/><path d="M2 1.4 H8.6" stroke="#77797b" stroke-width="0.9"/><path d="M1.7 3.6 V13 M4.2 3.6 V13 M6.4 3.6 V8 M8.9 3.6 V8" fill="none" stroke="#8c8f91" stroke-width="1"/><path d="M1.2 13.2 H7.6" stroke="#8c8f91" stroke-width="1"/><rect x="7.8" y="8.6" width="6.4" height="6" fill="#d9822b"/><path d="M7.8 11.6 H14.2 M11 8.6 V14.6" stroke="#b8651a" stroke-width="0.7"/></svg>
<svg class="a" style="left:395.1px;top:386.5px" width="10.8" height="12.4" viewBox="0 0 10.8 12.4" preserveAspectRatio="none"><path d="M0 1 H10.8" stroke="#9a9d9f" stroke-width="1.5"/><path d="M5.4 12.2 V3.6" fill="none" stroke="#4a88c7" stroke-width="2.1"/><path d="M2.4 6.6 L5.4 3.2 L8.4 6.6" fill="none" stroke="#4a88c7" stroke-width="1.9"/></svg>
<svg class="a" style="left:418px;top:386.3px" width="10.6" height="12.5" viewBox="0 0 10.8 12.4" preserveAspectRatio="none"><path d="M0 11.4 H10.8" stroke="#9a9d9f" stroke-width="1.5"/><path d="M5.4 0 V8.8" fill="none" stroke="#4a88c7" stroke-width="2.1"/><path d="M2.4 5.8 L5.4 9.2 L8.4 5.8" fill="none" stroke="#4a88c7" stroke-width="1.9"/></svg>
<div class="a" style="left:433.8px;top:381px;width:23px;height:22.8px;background:#5a5d5f;border-radius:4px"></div>
<svg class="a" style="left:443px;top:385px" width="5.6" height="14.6" viewBox="0 0 5.6 14.6" preserveAspectRatio="none"><path d="M1.3 0.4 V14.2" stroke="#4a88c7" stroke-width="1.5"/><path d="M0.5 0.9 H5 M0.5 13.7 H5" stroke="#4a88c7" stroke-width="1.1"/><path d="M4.4 1.2 V13.6" stroke="#4a88c7" stroke-width="0.6" opacity=".8"/><path d="M2 3.6 H4 M2 11 H4" stroke="#4a88c7" stroke-width="0.7"/></svg>
<svg class="a" style="left:467.6px;top:386.6px" width="13" height="12.6" viewBox="0 0 16 16" preserveAspectRatio="none"><path d="M6.2 6.2 L1.4 1.4" stroke="#5e6163" stroke-width="1.7" fill="none"/><path d="M0.4 0.4 L4.7 0.4 L0.4 4.7 Z" fill="#5e6163"/><path d="M9.8 6.2 L14.6 1.4" stroke="#5e6163" stroke-width="1.7" fill="none"/><path d="M15.6 0.4 L11.3 0.4 L15.6 4.7 Z" fill="#5e6163"/><path d="M6.2 9.8 L1.4 14.6" stroke="#5e6163" stroke-width="1.7" fill="none"/><path d="M0.4 15.6 L4.7 15.6 L0.4 11.3 Z" fill="#5e6163"/><path d="M9.8 9.8 L14.6 14.6" stroke="#5e6163" stroke-width="1.7" fill="none"/><path d="M15.6 15.6 L11.3 15.6 L15.6 11.3 Z" fill="#5e6163"/></svg>
<svg class="a" style="left:490.3px;top:386.6px" width="12.9" height="12.6" viewBox="0 0 16 16" preserveAspectRatio="none"><path d="M0.8 0.8 L5.7 5.7" stroke="#5e6163" stroke-width="1.9" fill="none"/><path d="M6.7 6.7 L2.1 6.7 L6.7 2.1 Z" fill="#5e6163"/><path d="M15.2 0.8 L10.3 5.7" stroke="#5e6163" stroke-width="1.9" fill="none"/><path d="M9.3 6.7 L13.9 6.7 L9.3 2.1 Z" fill="#5e6163"/><path d="M0.8 15.2 L5.7 10.3" stroke="#5e6163" stroke-width="1.9" fill="none"/><path d="M6.7 9.3 L2.1 9.3 L6.7 13.9 Z" fill="#5e6163"/><path d="M15.2 15.2 L10.3 10.3" stroke="#5e6163" stroke-width="1.9" fill="none"/><path d="M9.3 9.3 L13.9 9.3 L9.3 13.9 Z" fill="#5e6163"/></svg>
<svg class="a" style="left:519.8px;top:385.8px" width="9.4" height="13.2" viewBox="0 0 9.4 13.6" preserveAspectRatio="none"><path d="M0.2 0.8 H9.2 M0.2 12.8 H9.2" stroke="#9a9d9f" stroke-width="1"/><path d="M4.7 1.8 L6.3 4.4 H3.1 Z M4.7 11.6 L6.3 9.2 H3.1 Z" fill="#4a88c7"/></svg>
<svg class="a" style="left:540px;top:389.9px" width="6.2" height="4.2" viewBox="0 0 16 10" preserveAspectRatio="none"><path d="M1 1.5 L8 8.5 L15 1.5" fill="none" stroke="#9a9d9f" stroke-width="1.2" vector-effect="non-scaling-stroke"/></svg>
<svg class="a" style="left:554.5px;top:385.2px" width="14.8" height="14.4" viewBox="0 0 16 16" preserveAspectRatio="none"><path d="M0.6 2.4 L6.8 9.4 V15 L9.2 13.8 V9.4 L15.4 2.4 Z" fill="#85888a"/><ellipse cx="8" cy="2.4" rx="7.2" ry="1.9" fill="#35383a" stroke="#85888a" stroke-width="1"/></svg>
<svg class="a" style="left:577.3px;top:389.9px" width="6.6" height="4.2" viewBox="0 0 16 10" preserveAspectRatio="none"><path d="M1 1.5 L8 8.5 L15 1.5" fill="none" stroke="#9a9d9f" stroke-width="1.2" vector-effect="non-scaling-stroke"/></svg>
<div class="a" style="left:1135.4px;top:381.2px;width:158.9px;height:22.2px;border:1px solid #5e6060;box-sizing:border-box;background:#45494a"></div>
<svg class="a" style="left:1138.8px;top:384.8px" width="15.2" height="15" viewBox="0 0 15.2 15" preserveAspectRatio="none"><circle cx="5.4" cy="5.4" r="4.4" fill="none" stroke="#8c8f91" stroke-width="1.1"/><path d="M8.8 8.8 L14 14" stroke="#9ea1a3" stroke-width="2.4"/></svg>
<div class="a" style="left:282px;top:408px;width:1013px;height:163px;border:1px solid #505456;box-sizing:border-box;background:#3c3f41"></div>
<div class="a" style="left:283.3px;top:409.5px;width:999.3px;height:149.7px;background:#45494a"></div>
<div class="a" style="left:283.3px;top:435.5px;width:999.3px;height:1.2px;background:#5f6264"></div>
<div class="a" style="left:394.2px;top:409.5px;width:1px;height:26px;background:#5f6264"></div>
<div class="a" style="left:477.4px;top:409.5px;width:1px;height:26px;background:#5f6264"></div>
<div class="a" style="left:560.5px;top:409.5px;width:1px;height:26px;background:#5f6264"></div>
<div class="a" style="left:609.1px;top:409.5px;width:1px;height:26px;background:#5f6264"></div>
<div class="a" style="left:663.0px;top:409.5px;width:1px;height:26px;background:#5f6264"></div>
<div class="a" style="left:715.9px;top:409.5px;width:1px;height:26px;background:#5f6264"></div>
<div class="a" style="left:1130.1px;top:409.5px;width:1px;height:26px;background:#5f6264"></div>
<span class="t" style="left:284.40px;top:414px;transform:scaleX(0.8964);">Time</span>
<span class="t" style="left:394.85px;top:414px;transform:scaleX(0.9457);">Status</span>
<span class="t" style="left:478.42px;top:414px;transform:scaleX(0.9776);">Command</span>
<span class="t" style="left:561.80px;top:414px;transform:scaleX(0.8036);">Exec</span>
<span class="t" style="left:610.40px;top:414px;transform:scaleX(0.9032);">Fetch</span>
<span class="t" style="left:663.86px;top:414px;transform:scaleX(0.9355);">Rows</span>
<span class="t" style="left:716.46px;top:414px;transform:scaleX(0.9392);">Message</span>
<span class="t" style="left:1130.04px;top:414px;transform:scaleX(0.9580);">SQL/Command</span>
<svg class="a" style="left:1283px;top:417.9px" width="10" height="12" viewBox="0 0 10 12" preserveAspectRatio="none"><path d="M0 1 H10 M0 4.3 H10 M0 7.6 H10 M0 10.9 H10" stroke="#85888a" stroke-width="1"/><path d="M2.8 0 V12 M6.2 0 V12 M9.5 0 V12" stroke="#85888a" stroke-width="1"/></svg>
<div class="a" style="left:283.3px;top:458.3px;width:110.4px;height:20.4px;background:#4d5153"></div>
<div class="a" style="left:394.9px;top:458.3px;width:82.0px;height:20.4px;background:#4d5153"></div>
<div class="a" style="left:478.1px;top:458.3px;width:81.9px;height:20.4px;background:#4d5153"></div>
<div class="a" style="left:561.2px;top:458.3px;width:47.4px;height:20.4px;background:#4d5153"></div>
<div class="a" style="left:609.8px;top:458.3px;width:52.7px;height:20.4px;background:#4d5153"></div>
<div class="a" style="left:663.7px;top:458.3px;width:51.7px;height:20.4px;background:#4d5153"></div>
<div class="a" style="left:716.6px;top:458.3px;width:413.0px;height:20.4px;background:#4d5153"></div>
<div class="a" style="left:1130.8px;top:458.3px;width:151.8px;height:20.4px;background:#4d5153"></div>
<svg class="a" style="left:287.8px;top:444.3px" width="10.1" height="5.7" viewBox="0 0 10 5.7" preserveAspectRatio="none"><path d="M0 0 H10 L5 5.7 Z" fill="#4a88c7"/></svg>
<span class="t b" style="left:305.60px;top:438px;transform:scaleX(0.9058);color:#c8c8c8;">23:20:13</span>
<svg class="a" style="left:400.4px;top:438.9px" width="8.3" height="14.7" viewBox="0 0 8.4 14.8" preserveAspectRatio="none"><rect x="0.8" y="0.5" width="6.8" height="13.8" fill="#625f5b" stroke="#7e7e7e" stroke-width="1.4"/><circle cx="4.2" cy="3.1" r="1.5" fill="#6b6e70"/><circle cx="4.2" cy="7.300000000000001" r="1.5" fill="#6b6e70"/><circle cx="4.2" cy="11.5" r="1.5" fill="#6f94ad"/></svg>
<span class="t" style="left:415.94px;top:438px;transform:scaleX(0.8569);">STARTED</span>
<span class="t" style="left:718.08px;top:438px;transform:scaleX(0.9223);">Executing for: 'MariaDB' [MariaDB], Database: tests</span>
<svg class="a" style="left:302px;top:463px" width="14.5" height="9.7" viewBox="0 0 14.5 9.8" preserveAspectRatio="none"><path d="M0.2 4.9 H11" fill="none" stroke="#4a88c7" stroke-width="1.7"/><path d="M7.6 1 L12.4 4.9 L7.6 8.8" fill="none" stroke="#4a88c7" stroke-width="2.5" stroke-linejoin="miter"/></svg>
<span class="t b" style="left:321.60px;top:460px;transform:scaleX(0.9192);color:#c8c8c8;">23:20:13</span>
<svg class="a" style="left:397.3px;top:461px" width="14.5" height="14.4" viewBox="0 0 14.4 14.4" preserveAspectRatio="none"><circle cx="7.2" cy="7.2" r="7" fill="#718c9c"/><path d="M3.6 7.4 L6.2 10 L11 4.8" fill="none" stroke="#3a444b" stroke-width="1.9"/></svg>
<span class="t" style="left:416.00px;top:460px;transform:scaleX(0.8016);">SUCCESS</span>
<span class="t" style="left:479.66px;top:460px;transform:scaleX(0.8400);text-decoration:underline;">CREATE</span>
<span class="t" style="left:578.50px;top:460px;transform:scaleX(0.9187);">0.033</span>
<span class="t" style="left:708.30px;top:460px;transform:scaleX(0.8714);">0</span>
<span class="t" style="left:719.00px;top:460px;transform:scaleX(0.9323);">OK. No rows were affected</span><span class="cd" style="left:1132.4px;top:458px;color:#b4b8bb;width:150.2px;overflow:hidden;letter-spacing:-0.05px">CREATE TABLE `pk_table` (</span>
<svg class="a" style="left:304px;top:486.3px" width="10.5" height="6.2" viewBox="0 0 10 6" preserveAspectRatio="none"><path d="M0 6 H10 L5 0 Z" fill="#4a88c7"/></svg>
<span class="t b" style="left:321.60px;top:481px;transform:scaleX(0.9192);color:#c8c8c8;">23:20:13</span>
<svg class="a" style="left:400.4px;top:482px" width="8.3" height="14.7" viewBox="0 0 8.4 14.8" preserveAspectRatio="none"><rect x="0.8" y="0.5" width="6.8" height="13.8" fill="#625f5b" stroke="#7e7e7e" stroke-width="1.4"/><circle cx="4.2" cy="3.1" r="1.5" fill="#e8c06a"/><circle cx="4.2" cy="7.300000000000001" r="1.5" fill="#6b6e70"/><circle cx="4.2" cy="11.5" r="1.5" fill="#6b6e70"/></svg>
<span class="t b" style="left:415.85px;top:481px;transform:scaleX(0.9525);color:#c8c8c8;">FINISHED</span>
<span class="t b" style="left:578.50px;top:481px;transform:scaleX(0.9187);color:#c8c8c8;">0.033</span>
<span class="t b" style="left:654.50px;top:481px;transform:scaleX(0.9286);color:#c8c8c8;">0</span>
<span class="t b" style="left:708.00px;top:481px;transform:scaleX(0.9429);color:#c8c8c8;">0</span>
<svg class="a" style="left:729.5px;top:482.4px" width="14" height="14" viewBox="0 0 14.4 14.4" preserveAspectRatio="none"><circle cx="7.2" cy="7.2" r="7" fill="#718c9c"/><path d="M3.6 7.4 L6.2 10 L11 4.8" fill="none" stroke="#3a444b" stroke-width="1.9"/></svg>
<span class="t b" style="left:748.84px;top:481px;transform:scaleX(0.8552);color:#c8c8c8;">Success: 1</span>
<div class="a" style="left:284px;top:560px;width:791px;height:10px;background:#595d5f"></div>
<div class="a" style="left:1155px;top:577.2px;width:9.5px;height:4px;background:#8aa4b0;border-radius:4px 4px 0 0"></div>
<div class="a" style="left:1194px;top:577.4px;width:8.5px;height:4px;background:#77797b;border-radius:4px 4px 0 0"></div>
</body></html>
